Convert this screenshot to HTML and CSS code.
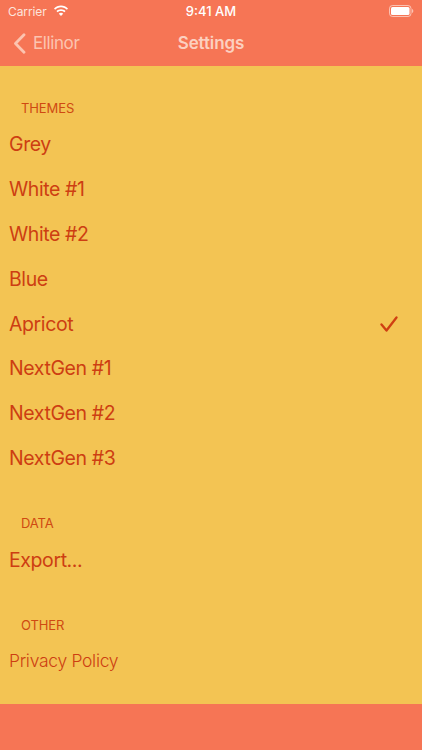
FILE: index.html
```html
<!DOCTYPE html>
<html lang="en">
<head>
<meta charset="utf-8">
<title>Settings</title>
<link rel="stylesheet" href="styles.css">
</head>
<body>
<div class="page">
  <header class="top">
    <div class="status">
      <div class="status-left">
        <span>Carrier</span>
        <svg class="wifi" width="16" height="12" viewBox="0 0 16 12"><path d="M8 2.3c2.3 0 4.4.9 5.900 2.400l1.100-1.100C13.200 1.700 10.700.6 8 .6S2.800 1.700 1 3.600l1.100 1.100C3.600 3.200 5.700 2.300 8 2.300zM8 5.900c1.300 0 2.500.5 3.400 1.400l1.200-1.200C11.400 4.900 9.800 4.200 8 4.200s-3.400.7-4.600 1.900l1.200 1.200C5.500 6.400 6.700 5.900 8 5.900zM8 7.800c-.9 0-1.600.3-2.200.9L8 11l2.200-2.300c-.6-.6-1.300-.9-2.200-.9z" fill="#fff"/></svg>
      </div>
      <div class="clock">9:41 AM</div>
      <div class="status-right">
        <svg width="25" height="12" viewBox="0 0 25 12"><rect x=".5" y=".5" width="21.500" height="11" rx="3" fill="none" stroke="#fff" stroke-opacity=".55"/><rect x="2" y="2" width="18.500" height="8" rx="1.500" fill="#fff"/><path d="M23 4v4c.8-.3 1.300-1.100 1.300-2s-.5-1.700-1.300-2z" fill="#fff" fill-opacity=".55"/></svg>
      </div>
    </div>
    <nav class="nav">
      <div class="back">
        <svg width="13" height="21" viewBox="0 0 13 21"><path d="M11 1.800 2.500 10.500l8.500 8.700" fill="none" stroke="#fcc4b0" stroke-width="2.800" stroke-linecap="round" stroke-linejoin="round"/></svg>
        <span>Ellinor</span>
      </div>
      <div class="title">Settings</div>
    </nav>
  </header>
  <main class="content">
    <h2 class="section section-first">THEMES</h2>
    <div class="row">Grey</div>
    <div class="row">White #1</div>
    <div class="row">White #2</div>
    <div class="row">Blue</div>
    <div class="row">Apricot
      <svg class="check" width="18" height="16" viewBox="0 0 18 16"><path d="M1.500 8.500 6.500 14.500 16.500 1.500" fill="none" stroke="#cf3f12" stroke-width="2.300" stroke-linecap="round" stroke-linejoin="round"/></svg>
    </div>
    <div class="row">NextGen #1</div>
    <div class="row">NextGen #2</div>
    <div class="row">NextGen #3</div>
    <h2 class="section section-data">DATA</h2>
    <div class="row">Export...</div>
    <h2 class="section section-other">OTHER</h2>
    <div class="row row-light">Privacy Policy</div>
  </main>
  <footer class="bottom"></footer>
</div>
</body>
</html>
```

FILE: styles.css
```css
* { box-sizing: border-box; }
html, body { margin: 0; padding: 0; }
body { font-family: Inter, "Liberation Sans", sans-serif; background: #f3c453; }
.page { width: 422px; height: 750px; display: flex; flex-direction: column; overflow: hidden; }
.top { height: 66px; background: #f67555; flex: none; display: flex; flex-direction: column; }
.status { height: 22px; display: grid; grid-template-columns: 1fr auto 1fr; align-items: center; padding: 0 8px; color: #fff; font-size: 12px; }
.status-left { display: flex; align-items: center; gap: 6px; color: #fde4dc; letter-spacing: -.1px; }
.wifi { margin-top: -1px; }
.clock { font-weight: 500; font-size: 13px; color: #fff; }
.status-right { display: flex; justify-content: flex-end; }
.nav { flex: 1; display: flex; align-items: center; position: relative; padding-left: 13px; padding-bottom: 2px; }
.back { display: flex; align-items: center; gap: 7px; color: #fcc4b0; font-size: 17px; letter-spacing: -.4px; }
.title { position: absolute; left: 0; right: 0; text-align: center; color: #fcd0c0; font-size: 17px; font-weight: 600; letter-spacing: -.1px; }
.content { flex: 1; color: #cd3e12; }
.section { margin: 0; padding-left: 21px; font-size: 13px; font-weight: 400; line-height: 16px; color: #cf4a12; letter-spacing: -.1px; }
.section-first { margin-top: 34px; margin-bottom: 6px; }
.section-data { margin-top: 35px; margin-bottom: 6px; }
.section-other { margin-top: 35px; margin-bottom: 5px; }
.row { height: 44.800px; display: flex; align-items: center; justify-content: space-between; padding: 0 24px 0 9px; font-size: 19.500px; letter-spacing: -.4px; }
.row-light { font-weight: 300; font-size: 17.500px; letter-spacing: -.3px; }
.bottom { height: 46px; flex: none; background: #f67555; }
```
